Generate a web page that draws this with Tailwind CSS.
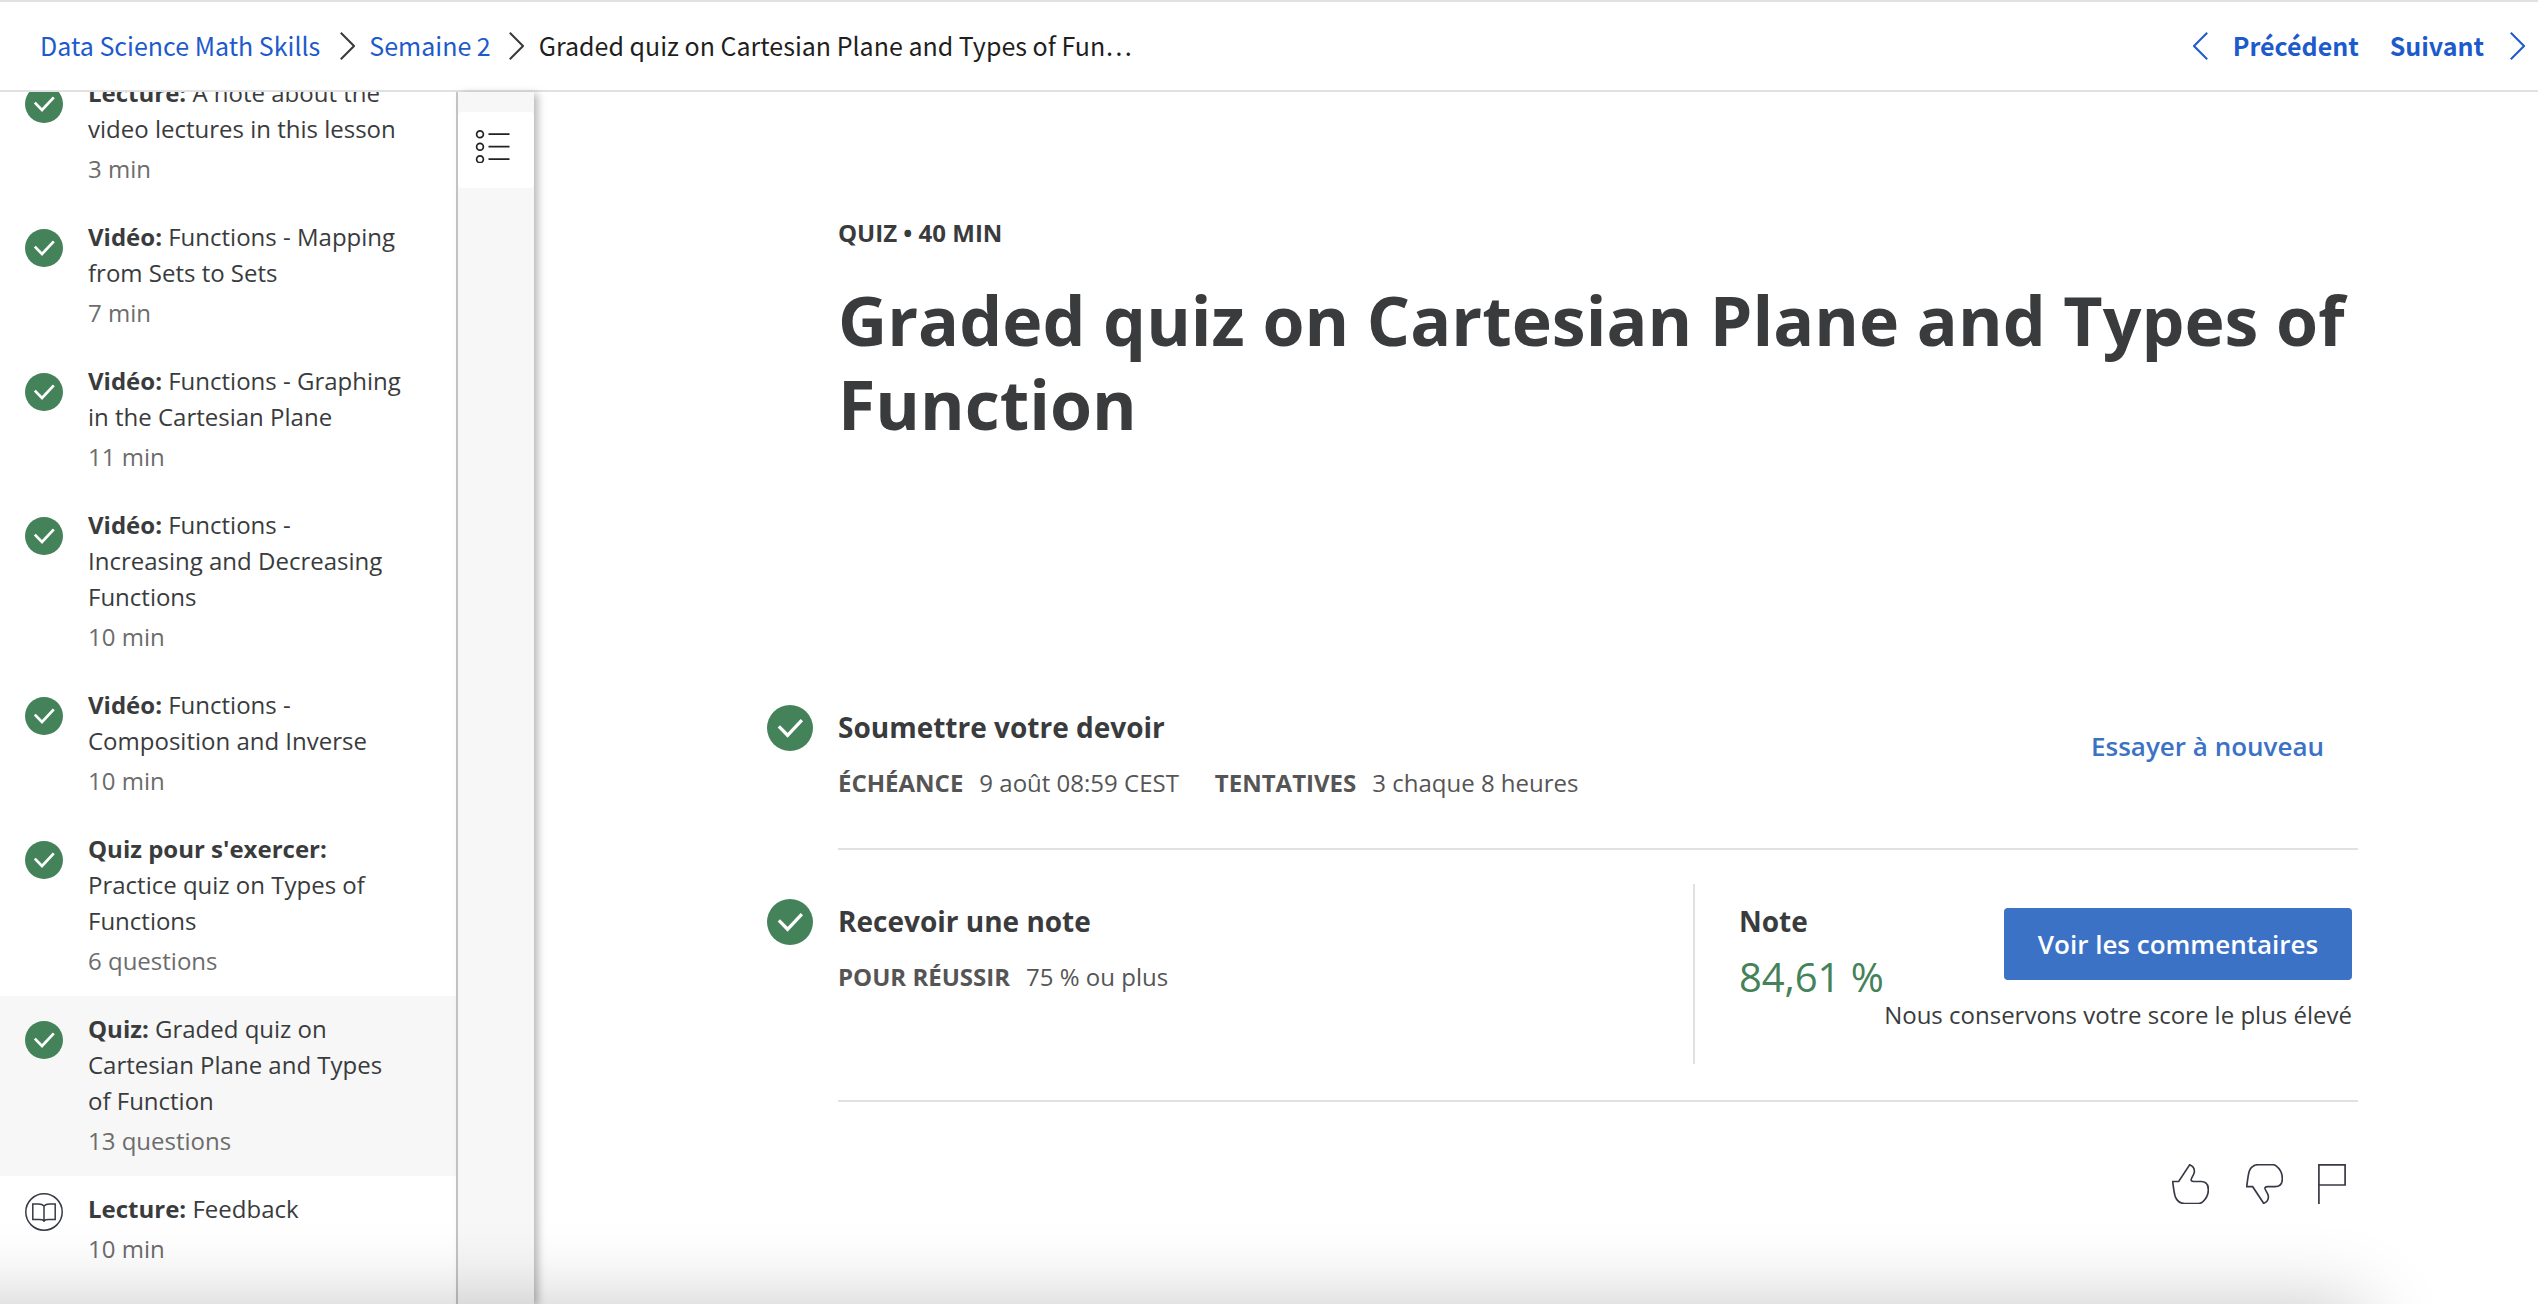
<!DOCTYPE html>
<html lang="fr">
<head>
<meta charset="utf-8">
<title>Graded quiz on Cartesian Plane and Types of Function</title>
<script src="https://cdn.jsdelivr.net/npm/@tailwindcss/browser@4"></script>
</head>
<body class="bg-white">
<div class="relative h-[1304px] w-[2538px] overflow-hidden font-['Open_Sans','Noto_Sans',sans-serif] text-[24px] leading-[36px] text-[#393b3d]">
<svg class="hidden">
  <symbol id="check" viewBox="0 0 38 38"><circle cx="19" cy="19" r="19" fill="#44825a"/><path d="M9.8 17.6 17 25 28.8 12.4" fill="none" stroke="#fff" stroke-width="2.7"/></symbol>
  <symbol id="right" viewBox="0 0 15 28"><path d="M.8.8 14 14 .8 27.2" fill="none" stroke="currentColor" stroke-width="2"/></symbol>
  <symbol id="left" viewBox="0 0 15 28"><path d="M14.2.8 1 14 14.2 27.2" fill="none" stroke="currentColor" stroke-width="2"/></symbol>
</svg>
<div class="flex h-full flex-col">
  <header class="flex h-[92px] shrink-0 items-center border-y-2 border-[#e1e1e1] pl-10 pr-[13px] font-['Noto_Sans_CJK_SC',sans-serif] text-[25px] text-[#1f1f1f]">
    <nav class="flex items-center">
      <a class="pb-0.5 text-[#1d5acb]">Data Science Math Skills</a>
      <svg class="ml-5 h-7 w-[15px] text-[#373a3c]"><use href="#right"/></svg>
      <a class="ml-3.5 pb-0.5 text-[#1d5acb]">Semaine 2</a>
      <svg class="ml-[18px] h-7 w-[15px] text-[#373a3c]"><use href="#right"/></svg>
      <span class="ml-[15px] pb-0.5">Graded quiz on Cartesian Plane and Types of Fun…</span>
    </nav>
    <nav class="ml-auto flex items-center font-bold text-[#1d5acb]">
      <svg class="h-7 w-[15px]"><use href="#left"/></svg>
      <a class="ml-[25px] pb-0.5">Précédent</a>
      <a class="ml-[31px] pb-0.5">Suivant</a>
      <svg class="ml-[26px] h-7 w-[15px]"><use href="#right"/></svg>
    </nav>
  </header>

  <div class="flex min-h-0 flex-1">
    <aside class="w-[458px] shrink-0 overflow-hidden border-r-2 border-[#c9c9c9]">
      <ul class="-mt-8">
        <li class="flex h-36 pt-[15px] pl-[25px]"><svg class="mt-[10px] size-[38px]"><use href="#check"/></svg><div class="ml-[25px] whitespace-nowrap"><b>Lecture:</b> A note about the<br>video lectures in this lesson<p class="mt-1 text-[#6c6c6c]">3 min</p></div></li>
        <li class="flex h-36 pt-[15px] pl-[25px]"><svg class="mt-[10px] size-[38px]"><use href="#check"/></svg><div class="ml-[25px] whitespace-nowrap"><b>Vidéo:</b> Functions - Mapping<br>from Sets to Sets<p class="mt-1 text-[#6c6c6c]">7 min</p></div></li>
        <li class="flex h-36 pt-[15px] pl-[25px]"><svg class="mt-[10px] size-[38px]"><use href="#check"/></svg><div class="ml-[25px] whitespace-nowrap"><b>Vidéo:</b> Functions - Graphing<br>in the Cartesian Plane<p class="mt-1 text-[#6c6c6c]">11 min</p></div></li>
        <li class="flex h-45 pt-[15px] pl-[25px]"><svg class="mt-[10px] size-[38px]"><use href="#check"/></svg><div class="ml-[25px] whitespace-nowrap"><b>Vidéo:</b> Functions -<br>Increasing and Decreasing<br>Functions<p class="mt-1 text-[#6c6c6c]">10 min</p></div></li>
        <li class="flex h-36 pt-[15px] pl-[25px]"><svg class="mt-[10px] size-[38px]"><use href="#check"/></svg><div class="ml-[25px] whitespace-nowrap"><b>Vidéo:</b> Functions -<br>Composition and Inverse<p class="mt-1 text-[#6c6c6c]">10 min</p></div></li>
        <li class="flex h-45 pt-[15px] pl-[25px]"><svg class="mt-[10px] size-[38px]"><use href="#check"/></svg><div class="ml-[25px] whitespace-nowrap"><b>Quiz pour s'exercer:</b><br>Practice quiz on Types of<br>Functions<p class="mt-1 text-[#6c6c6c]">6 questions</p></div></li>
        <li class="flex h-45 bg-[#f7f7f7] pt-[15px] pl-[25px]"><svg class="mt-[10px] size-[38px]"><use href="#check"/></svg><div class="ml-[25px] whitespace-nowrap"><b>Quiz:</b> Graded quiz on<br>Cartesian Plane and Types<br>of Function<p class="mt-1 text-[#6c6c6c]">13 questions</p></div></li>
        <li class="flex pt-[15px] pl-[25px]">
          <svg class="mt-0.5 size-[38px]" viewBox="0 0 38 38" fill="none" stroke="#373a46" stroke-width="1.5"><circle cx="19" cy="19" r="18.2"/><path d="M19 13C17.800 11.500 16 11 13.500 11H7.800V26.500H14C16.500 26.500 18 26.700 19 27.600C20 26.700 21.500 26.500 24 26.500H30.200V11H24.500C22 11 20.200 11.500 19 13ZM19 13V29"/></svg>
          <div class="ml-[25px] whitespace-nowrap"><b>Lecture:</b> Feedback<p class="mt-1 text-[#6c6c6c]">10 min</p></div>
        </li>
      </ul>
    </aside>

    <div class="relative w-19 shrink-0 bg-[#f7f7f7] pt-5 shadow-[4px_2px_8px_rgba(0,0,0,0.28)]">
      <button class="flex h-19 w-19 items-start rounded bg-white pt-[17px] pl-[17px]">
        <svg class="h-[34px] w-[36px]" viewBox="0 0 36 34" fill="none" stroke="#222" stroke-width="1.7"><circle cx="5" cy="5.200" r="3.400"/><circle cx="5" cy="17.700" r="3.400"/><circle cx="5" cy="30.200" r="3.400"/><path d="M13.500 5.200H34.500M13.500 17.700H34.500M13.500 30.200H34.500"/></svg>
      </button>
    </div>

    <main class="w-[1824px] pt-[123px] pl-[233px]">
      <div class="pl-[71px]">
        <p class="font-bold">QUIZ • 40 MIN</p>
        <h1 class="mt-[27px] text-[68px] leading-[84px] font-bold whitespace-nowrap">Graded quiz on Cartesian Plane and Types of<br>Function</h1>
      </div>

      <section class="mt-[224px] flex">
        <svg class="mt-[35px] size-[46px]"><use href="#check"/></svg>
        <div class="ml-[25px] flex h-[180px] flex-1 border-b-2 border-[#e1e1e1]">
          <div class="pt-9">
            <h2 class="text-[28px] leading-[42px] font-bold">Soumettre votre devoir</h2>
            <p class="mt-[17px] flex text-[#555]"><b>ÉCHÉANCE</b><span class="ml-4">9 août 08:59 CEST</span><b class="ml-9">TENTATIVES</b><span class="ml-4">3 chaque 8 heures</span></p>
          </div>
          <a class="mt-14 mr-[34px] ml-auto text-[26px] leading-[40px] font-semibold text-[#3c72c6]">Essayer à nouveau</a>
        </div>
      </section>

      <section class="flex">
        <svg class="mt-[49px] size-[46px]"><use href="#check"/></svg>
        <div class="ml-[25px] flex h-[252px] flex-1 border-b-2 border-[#e1e1e1] pt-[34px]">
          <div class="w-[855px] pt-4">
            <h2 class="text-[28px] leading-[42px] font-bold">Recevoir une note</h2>
            <p class="mt-[17px] flex text-[#555]"><b>POUR RÉUSSIR</b><span class="ml-4">75 % ou plus</span></p>
          </div>
          <div class="flex h-[180px] flex-1 border-l-2 border-[#e1e1e1] pr-1.5 pl-11">
            <div class="w-[145px] shrink-0 pt-4 whitespace-nowrap">
              <h2 class="text-[28px] leading-[42px] font-bold">Note</h2>
              <p class="mt-2 text-[40px] leading-[54px] tracking-[-0.1px] text-[#44825a]">84,61 %</p>
            </div>
            <div class="flex flex-1 flex-col items-end pt-6 whitespace-nowrap">
              <button class="h-[72px] w-[348px] rounded bg-[#3c72c6] text-[26px] font-semibold text-white">Voir les commentaires</button>
              <p class="mt-[17px]">Nous conservons votre score le plus élevé</p>
            </div>
          </div>
        </div>
      </section>

      <div class="mt-[62px] flex justify-end pr-3">
        <svg class="h-[40px] w-[37px]" viewBox="36 221.500 111 120" fill="none" stroke="#373a46" stroke-width="5"><path d="M38 274H56L89 224C99 228 104 236 103 246C102 256 90 266 94 271C96 274 98 274 101 274H124C138 274 145 284 145 299C145 314 136 328 128 335C123 339 120 340 116 340H74C60 340 51 332 46 320C42 308 41 296 38 274Z"/></svg>
        <svg class="ml-[37px] h-[40px] w-[37px]" viewBox="258 222 111 120" fill="none" stroke="#373a46" stroke-width="5"><path d="M260 290H278L311 340C321 336 326 328 325 318C324 308 312 298 315 293C317 290 320 290 323 290H345C360 290 367 280 367 266C367 250 359 236 350 229C345 225 342 224 338 224H296C282 224 273 230 268 243C264 255 263 270 260 290Z"/></svg>
        <svg class="ml-[35px] h-[40px] w-[28px]" viewBox="0 0 28 40" fill="none" stroke="#373a46" stroke-width="1.700"><path d="M.9 40V.9H27.100V21H.9"/></svg>
      </div>
    </main>
  </div>
</div>
<!-- soft shadow rising from the bottom edge -->
<div class="pointer-events-none absolute inset-x-0 bottom-0 h-[110px] overflow-hidden">
  <div class="absolute top-[112px] -left-[200px] h-[300px] w-[2562px] shadow-[0_0_76px_rgba(0,0,0,0.23)]"></div>
</div>
</div>
</body>
</html>
